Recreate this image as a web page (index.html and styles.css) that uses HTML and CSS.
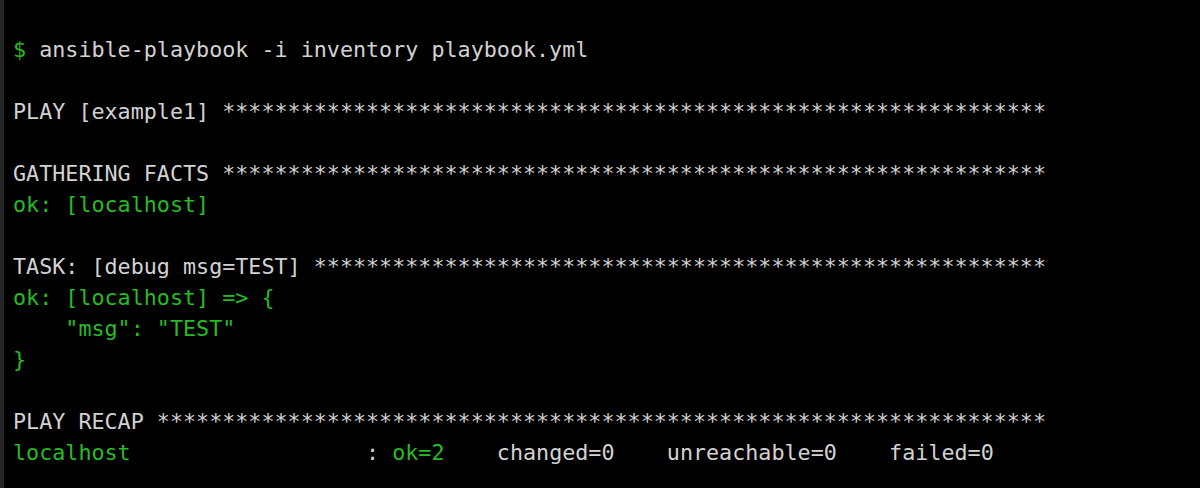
FILE: index.html
```html
<!DOCTYPE html>
<html lang="en">
<head>
<meta charset="utf-8">
<title>Terminal</title>
<link rel="stylesheet" href="styles.css">
</head>
<body>
<main class="terminal">
<pre class="output"><span class="g">$</span> ansible-playbook -i inventory playbook.yml

PLAY [example1] ***************************************************************

GATHERING FACTS ***************************************************************
<span class="g">ok: [localhost]</span>

TASK: [debug msg=TEST] ********************************************************
<span class="g">ok: [localhost] =&gt; {
    "msg": "TEST"
}</span>

PLAY RECAP ********************************************************************
<span class="g">localhost</span>                  : <span class="g">ok=2</span>    changed=0    unreachable=0    failed=0</pre>
</main>
</body>
</html>
```
FILE: styles.css
```css
html, body {
  margin: 0;
  padding: 0;
  background: #000;
  height: 100%;
  overflow: hidden;
}

.terminal {
  box-sizing: border-box;
  height: 488px;
  border-left: 4px solid #262626;
  background: #000;
  padding: 34px 0 0 9px;
}

.output {
  margin: 0;
  font-family: "DejaVu Sans Mono", monospace;
  font-size: 21.72px;
  line-height: 31px;
  color: #d2d2d2;
  white-space: pre;
}

.g {
  color: #25bc24;
}
```
